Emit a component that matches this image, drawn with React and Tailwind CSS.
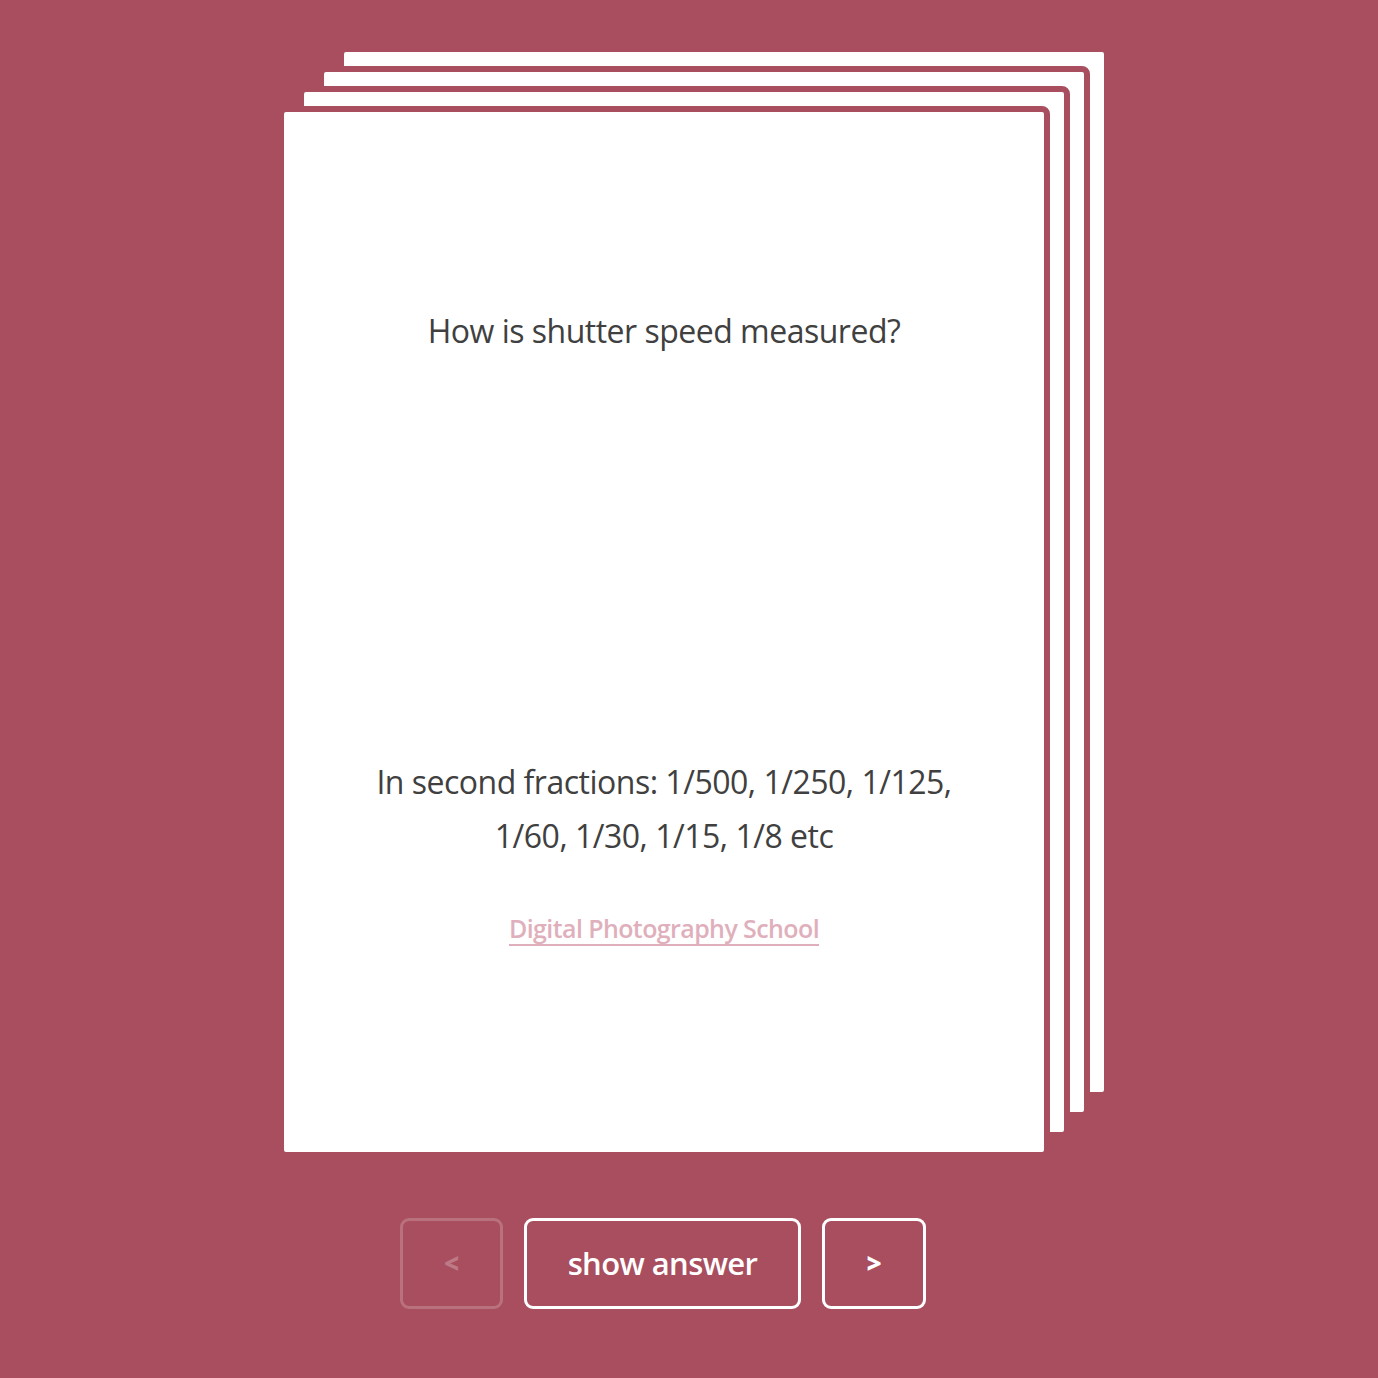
import React from 'react';

const font = { fontFamily: '"Open Sans", "Noto Sans", sans-serif' };

const BackCard = ({ className }) => (
  <div className={`absolute w-[772px] h-[1052px] rounded-[8px] border-[6px] border-[#a84e5e] bg-white ${className}`} />
);

const App = () => {
  return (
    <div className="min-h-screen bg-[#a84e5e] pt-[46px]" style={font}>
      <div className="relative ml-[278px] w-[832px] h-[1112px]">
        <BackCard className="left-[60px] top-[0px]" />
        <BackCard className="left-[40px] top-[20px]" />
        <BackCard className="left-[20px] top-[40px]" />
        <div className="absolute left-0 top-[60px] w-[772px] h-[1052px] rounded-[8px] border-[6px] border-[#a84e5e] bg-white flex flex-col items-center text-[#404040]">
          <p className="mt-[197px] text-[32px] leading-[44px] tracking-[-0.5px]">How is shutter speed measured?</p>
          <p className="mt-[402px] text-[32px] leading-[54px] text-center tracking-[-0.5px] w-[640px]">
            In second fractions: 1/500, 1/250, 1/125, 1/60, 1/30, 1/15, 1/8 etc
          </p>
          <a className="mt-[49px] text-[25px] leading-[32px] text-[#dfb0bc] border-b-2 border-[#dfb0bc] tracking-[-0.6px] font-semibold">
            Digital Photography School
          </a>
        </div>
      </div>
      <div className="flex gap-[21px] ml-[400px] mt-[60px] pb-[69px]">
        <button className="w-[103px] h-[91px] rounded-[9px] border-[3px] border-white/20 text-white/25 text-[26px] font-extrabold">&lt;</button>
        <button className="w-[277px] h-[91px] rounded-[9px] border-[3px] border-white text-white text-[31px] font-semibold tracking-[-0.6px]">show answer</button>
        <button className="w-[104px] h-[91px] rounded-[9px] border-[3px] border-white text-white text-[26px] font-extrabold">&gt;</button>
      </div>
    </div>
  );
};

export default App;
